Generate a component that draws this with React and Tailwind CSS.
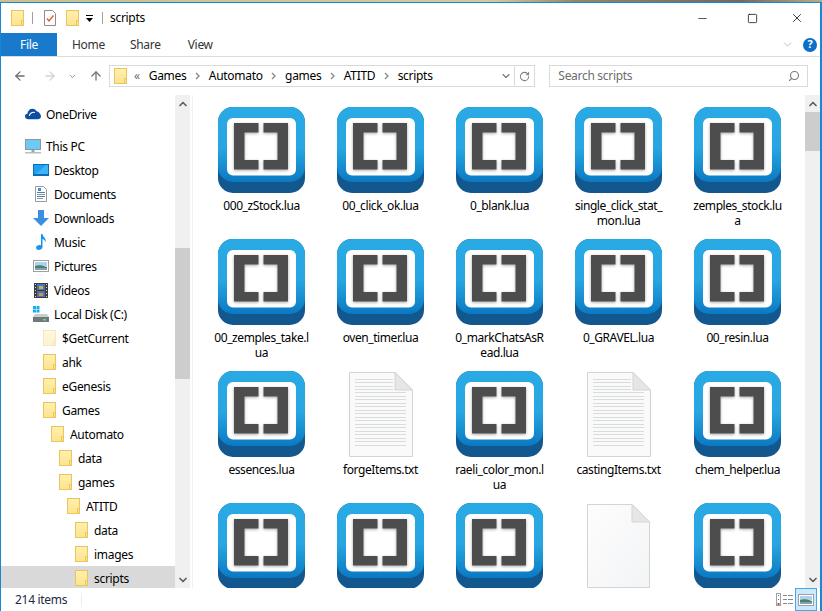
import React from 'react';
import { ArrowLeft, ArrowRight, ArrowUp, ChevronDown, ChevronUp, RotateCw, Search, Minus, Square, X } from 'lucide-react';

const FolderIcon = ({ faded = false }) => (
  <svg width="13" height="16" viewBox="0 0 13 16" className={`flex-shrink-0 ${faded ? 'opacity-40' : ''}`}>
    <defs>
      <linearGradient id="folderFill" x1="0" y1="0" x2="0" y2="1">
        <stop offset="0" stopColor="#ffefb0" />
        <stop offset="1" stopColor="#fde38c" />
      </linearGradient>
    </defs>
    <rect x="0.5" y="0.5" width="12" height="15" fill="url(#folderFill)" stroke="#e9c65c" />
    <path d="M10.5 15.5V10.5H12.5" fill="none" stroke="#e9c65c" />
  </svg>
);

const BracketsIcon = () => (
  <svg width="87" height="86" viewBox="0 0 87 86" className="flex-shrink-0">
    <defs>
      <linearGradient id="bracketsBlue" x1="0" y1="0" x2="0" y2="1">
        <stop offset="0" stopColor="#2aaae4" />
        <stop offset="0.55" stopColor="#27a6e1" />
        <stop offset="1" stopColor="#0a79c3" />
      </linearGradient>
      <filter id="bracketsShadow" x="-20%" y="-20%" width="140%" height="140%">
        <feDropShadow dx="0" dy="1" stdDeviation="1.5" floodColor="#000" floodOpacity="0.35" />
      </filter>
    </defs>
    <rect x="0" y="0" width="87" height="86" rx="15" fill="#13578f" />
    <rect x="0" y="0" width="87" height="75" rx="15" fill="url(#bracketsBlue)" />
    <rect x="9" y="11" width="69" height="57.5" rx="6" fill="#fff" />
    <g filter="url(#bracketsShadow)" fill="#4d4d4d">
      <path d="M16 16H40.500V25.500H26.500V53H40.500V62.500H16Z" />
      <path d="M45.500 16H70V62.500H45.500V53H59.500V25.500H45.500Z" />
    </g>
  </svg>
);

const TextFileIcon = () => (
  <svg width="64" height="85" viewBox="0 0 64 85" className="flex-shrink-0">
    <path d="M0.500 0.500H46L63.500 18V84.500H0.500Z" fill="#fafafa" stroke="#d4d4d4" />
    <path d="M46 0.500V18H63.500Z" fill="#e6e6e6" stroke="#d4d4d4" />
    {[7, 10, 14, 17].map((y) => (
      <rect key={y} x="6" y={y} width="38" height="1" fill="#d9dcdc" />
    ))}
    {[20, 24, 27, 31, 34, 38, 41, 45, 48, 52, 55, 59, 62, 66, 69, 73].map((y) => (
      <rect key={y} x="6" y={y} width="51" height="1" fill="#d9dcdc" />
    ))}
  </svg>
);

const BlankFileIcon = () => (
  <svg width="63" height="84" viewBox="0 0 63 84" className="flex-shrink-0">
    <defs>
      <linearGradient id="blankFill" x1="0" y1="0" x2="1" y2="1">
        <stop offset="0" stopColor="#fdfdfd" />
        <stop offset="1" stopColor="#f3f4f6" />
      </linearGradient>
    </defs>
    <path d="M0.500 0.500H45L62.500 18V83.500H0.500Z" fill="url(#blankFill)" stroke="#d4d4d4" />
    <path d="M45 0.500V18H62.500Z" fill="#e6e6e6" stroke="#d4d4d4" />
  </svg>
);

const OneDriveIcon = () => (
  <svg width="17" height="12" viewBox="0 0 17 12">
    <path d="M3 11.500C1 11.500 0 10 0 8.500C0 7 1 6 2.500 5.800C3 2.500 5.500 0.500 8 0.500C10 0.500 11.500 1.500 12.300 3C14.500 3.500 16.800 5.500 17 8.500C17 10 16 11.500 14 11.500Z" fill="#0c4da2" />
    <path d="M4.500 8C5.500 5 8 3.500 10.500 4.500" fill="none" stroke="#fff" strokeWidth="1.200" />
  </svg>
);

const ThisPcIcon = () => (
  <svg width="16" height="15" viewBox="0 0 16 15">
    <rect x="0.500" y="0.500" width="15" height="10" fill="#6fc9f7" stroke="#8a9aa4" />
    <rect x="6.500" y="11" width="3" height="2" fill="#9aa5ad" />
    <rect x="0" y="13" width="16" height="1.500" fill="#b6bec4" />
  </svg>
);

const DesktopIcon = () => (
  <svg width="16" height="12" viewBox="0 0 16 12">
    <rect x="0" y="0" width="16" height="12" fill="#0c6bb3" />
    <rect x="1" y="1" width="14" height="9" fill="#1ba1f0" />
    <path d="M3 10L13 1H15V10Z" fill="#3fb4f5" />
  </svg>
);

const DocumentsIcon = () => (
  <svg width="12" height="16" viewBox="0 0 12 16">
    <path d="M0.500 0.500H8.500L11.500 3.500V15.500H0.500Z" fill="#fdfdfd" stroke="#9a9a9a" />
    <rect x="3" y="2" width="3" height="3" fill="#3d8fd6" />
    <rect x="2" y="6" width="8" height="1" fill="#5b7f95" />
    <rect x="2" y="8" width="8" height="1" fill="#7aa0b8" />
    <rect x="2" y="10" width="8" height="1" fill="#5b7f95" />
    <rect x="2" y="12" width="6" height="1" fill="#7aa0b8" />
  </svg>
);

const DownloadsIcon = () => (
  <svg width="16" height="16" viewBox="0 0 16 16">
    <path d="M5 0H11V8H16L8 16L0 8H5Z" fill="#3a8fe0" />
  </svg>
);

const MusicIcon = () => (
  <svg width="11" height="16" viewBox="0 0 11 16">
    <path d="M5 0H6.500C6.800 3 10.500 4 9.800 8.500C9.300 6.500 8 5.500 6.500 5V13C6.500 15 4.500 16 2.500 16C1 16 0 15 0 13.800C0 12.300 1.800 11 3.500 11C4 11 4.600 11.100 5 11.300Z" fill="#1a93ec" />
  </svg>
);

const PicturesIcon = () => (
  <svg width="16" height="12" viewBox="0 0 16 12">
    <rect x="0.500" y="0.500" width="15" height="11" fill="#fff" stroke="#a0a0a0" />
    <rect x="2" y="2" width="12" height="4" fill="#a9d3ee" />
    <path d="M2 6C5 4.500 9 5 14 7V10H2Z" fill="#4f7f6a" />
    <rect x="2" y="8" width="12" height="2" fill="#7ea3b5" />
  </svg>
);

const VideosIcon = () => (
  <svg width="14" height="15" viewBox="0 0 14 15">
    <rect x="0" y="0" width="14" height="15" fill="#3c3c3c" />
    {[1, 4, 7, 10, 13].map((y) => (
      <g key={y}>
        <rect x="1" y={y} width="1" height="1" fill="#ddd" />
        <rect x="12" y={y} width="1" height="1" fill="#ddd" />
      </g>
    ))}
    <rect x="3" y="1" width="8" height="6" fill="#3a78c8" />
    <rect x="5" y="3" width="4" height="3" fill="#e3a92e" />
    <rect x="3" y="8" width="8" height="6" fill="#4a6fc0" />
    <rect x="5" y="10" width="4" height="3" fill="#d8962a" />
  </svg>
);

const LocalDiskIcon = () => (
  <svg width="16" height="16" viewBox="0 0 16 16">
    <rect x="0" y="0" width="3" height="3" fill="#16b0f0" />
    <rect x="3.500" y="0" width="3" height="3" fill="#16b0f0" />
    <rect x="0" y="3.500" width="3" height="3" fill="#16b0f0" />
    <rect x="3.500" y="3.500" width="3" height="3" fill="#16b0f0" />
    <path d="M2 8H14L16 11H0Z" fill="#c9cdd0" />
    <rect x="0" y="11" width="16" height="5" fill="#71777a" />
    <rect x="10" y="13" width="3" height="1.500" fill="#5fe35f" />
  </svg>
);

const CheckDocIcon = () => (
  <svg width="12" height="16" viewBox="0 0 12 16">
    <path d="M0.500 0.500H8.500L11.500 3.500V15.500H0.500Z" fill="#fff" stroke="#8d8d8d" />
    <path d="M3 8.500L5 11L9.500 5.500" fill="none" stroke="#e2592a" strokeWidth="1.300" />
  </svg>
);

const TreeRow = ({ icon, label, indent }) => (
  <div className={`h-6 flex items-center flex-shrink-0 gap-[5px] ${indent}`}>
    <div className="w-[16px] flex items-center justify-center flex-shrink-0">{icon}</div>
    <span className="pt-[2px] text-black whitespace-nowrap">{label}</span>
  </div>
);

const FolderRow = ({ label, indent, faded, selected }) => (
  <div className={`h-6 flex items-center flex-shrink-0 gap-[6px] ${indent} ${selected ? 'bg-[#d9d9d9]' : ''}`}>
    <FolderIcon faded={faded} />
    <span className="pt-[2px] text-black whitespace-nowrap">{label}</span>
  </div>
);

const FileCell = ({ name, kind = 'brackets' }) => (
  <div className="h-[132px] w-[119px] flex flex-col items-center flex-shrink-0">
    <div className="h-[86px] flex items-center justify-center">
      {kind === 'brackets' && <BracketsIcon />}
      {kind === 'text' && <TextFileIcon />}
      {kind === 'blank' && <BlankFileIcon />}
    </div>
    <div className="mt-[5px] text-center leading-[15px] tracking-[-0.42px] text-black whitespace-pre-line">{name}</div>
  </div>
);

const FILES = [
  { name: '000_zStock.lua' },
  { name: '00_click_ok.lua' },
  { name: '0_blank.lua' },
  { name: 'single_click_stat_\nmon.lua' },
  { name: 'zemples_stock.lu\na' },
  { name: '00_zemples_take.l\nua' },
  { name: 'oven_timer.lua' },
  { name: '0_markChatsAsR\nead.lua' },
  { name: '0_GRAVEL.lua' },
  { name: '00_resin.lua' },
  { name: 'essences.lua' },
  { name: 'forgeItems.txt', kind: 'text' },
  { name: 'raeli_color_mon.l\nua' },
  { name: 'castingItems.txt', kind: 'text' },
  { name: 'chem_helper.lua' },
  { name: '' },
  { name: '' },
  { name: '' },
  { name: '', kind: 'blank' },
  { name: '' },
];

const Crumb = ({ label }) => (
  <>
    <span className="text-[#000]">{label}</span>
    <svg width="5" height="8" viewBox="0 0 5 8" className="mx-[8.7px]">
      <path d="M1 1L4 4L1 7" fill="none" stroke="#8a8a8a" strokeWidth="1.400" />
    </svg>
  </>
);

const Scrollbar = ({ thumb }) => (
  <div className="w-[15px] flex-shrink-0 bg-[#f0f0f0] flex flex-col items-center">
    <div className="h-[17px] flex items-center justify-center flex-shrink-0">
      <ChevronUp size={12} strokeWidth={3.5} className="text-[#606060]" />
    </div>
    <div className={`w-full bg-[#cdcdcd] flex-shrink-0 ${thumb}`} />
    <div className="flex-1" />
    <div className="h-[17px] flex items-center justify-center flex-shrink-0">
      <ChevronDown size={12} strokeWidth={3.5} className="text-[#606060]" />
    </div>
  </div>
);

export default function App() {
  return (
    <div className="w-[822px] h-[611px] overflow-hidden flex flex-col bg-white text-[12px] font-['Noto_Sans',sans-serif] tracking-[-0.3px]">
      {/* wallpaper behind the window */}
      <div className="h-[2px] flex-shrink-0 bg-[linear-gradient(90deg,#c9c08e_0%,#d2cba0_60%,#8f8a66_70%,#6f6a66_90%,#b5ae84_100%)]" />

      <div className="flex-1 min-h-0 flex flex-col border-x border-t border-[#1a86d8] border-r-2">
        {/* title bar */}
        <div className="h-[30px] flex-shrink-0 flex items-center pl-[10px]">
          <FolderIcon />
          <div className="w-px h-[12px] bg-[#a0a0a0] ml-[8px] mr-[11px]" />
          <CheckDocIcon />
          <div className="ml-[10px]"><FolderIcon /></div>
          <svg width="8" height="7" viewBox="0 0 8 7" className="ml-[7px]">
            <rect x="0" y="0" width="7" height="1" fill="#000" />
            <path d="M0 3H7L3.500 7Z" fill="#000" />
          </svg>
          <div className="w-px h-[12px] bg-[#a0a0a0] ml-[8px] mr-[7px]" />
          <span className="text-black">scripts</span>
          <div className="flex-1" />
          <Minus size={13} strokeWidth={1.2} className="text-black mr-[38px]" />
          <Square size={11} strokeWidth={1.6} className="text-black mr-[32px]" />
          <X size={14} strokeWidth={1.3} className="text-black mr-[16px]" />
        </div>

        {/* ribbon tabs */}
        <div className="h-[24px] flex-shrink-0 flex items-center border-b border-[#dadbdc]">
          <div className="w-[56px] h-[23px] bg-[#1979ca] text-white flex items-center justify-center">File</div>
          <span className="ml-[15px] text-[#333]">Home</span>
          <span className="ml-[25px] text-[#333]">Share</span>
          <span className="ml-[27px] text-[#333]">View</span>
          <div className="flex-1" />
          <ChevronDown size={13} strokeWidth={1.2} className="text-[#9a9a9a] mr-[9px]" />
          <div className="w-[14px] h-[14px] mr-[3px] rounded-full bg-[#0a6fc9] text-white text-[11px] font-bold flex items-center justify-center">?</div>
        </div>

        {/* address bar */}
        <div className="h-[38px] flex-shrink-0 flex items-center pl-[12px] pr-[12px]">
          <ArrowLeft size={14} strokeWidth={2.2} className="text-[#6d6d6d]" />
          <ArrowRight size={14} strokeWidth={2.2} className="text-[#d4d4d4] ml-[16px]" />
          <ChevronDown size={9} strokeWidth={2.5} className="text-[#8a8a8a] ml-[11px]" />
          <ArrowUp size={14} strokeWidth={2.2} className="text-[#6d6d6d] ml-[12px]" />
          <div className="ml-[6px] w-[427px] h-[22px] border border-[#d9d9d9] flex items-center pl-[4px]">
            <FolderIcon />
            <span className="ml-[7px] mr-[9px] text-[#6d6d6d]">«</span>
            <Crumb label="Games" />
            <Crumb label="Automato" />
            <Crumb label="games" />
            <Crumb label="ATITD" />
            <span className="text-black">scripts</span>
            <div className="flex-1" />
            <ChevronDown size={12} strokeWidth={2.2} className="text-[#777] mr-[2px]" />
            <div className="h-full w-[20px] border-l border-[#d9d9d9] flex items-center justify-center">
              <RotateCw size={11} strokeWidth={2.2} className="text-[#808080]" />
            </div>
          </div>
          <div className="ml-[14px] w-[259px] h-[22px] border border-[#d9d9d9] flex items-center justify-between pl-[8px] pr-[7px]">
            <span className="text-[#6d6d6d]">Search scripts</span>
            <Search size={12} strokeWidth={2.2} className="text-[#777] -scale-x-100" />
          </div>
        </div>

        {/* body */}
        <div className="flex-1 min-h-0 flex">
          {/* nav pane */}
          <div className="w-[174px] flex-shrink-0 overflow-hidden flex flex-col pt-[7px] pb-0">
            <TreeRow icon={<OneDriveIcon />} label="OneDrive" indent="pl-[24px]" />
            <div className="mt-[8px]">
              <TreeRow icon={<ThisPcIcon />} label="This PC" indent="pl-[24px]" />
            </div>
            <TreeRow icon={<DesktopIcon />} label="Desktop" indent="pl-[32px]" />
            <TreeRow icon={<DocumentsIcon />} label="Documents" indent="pl-[32px]" />
            <TreeRow icon={<DownloadsIcon />} label="Downloads" indent="pl-[32px]" />
            <TreeRow icon={<MusicIcon />} label="Music" indent="pl-[32px]" />
            <TreeRow icon={<PicturesIcon />} label="Pictures" indent="pl-[32px]" />
            <TreeRow icon={<VideosIcon />} label="Videos" indent="pl-[32px]" />
            <TreeRow icon={<LocalDiskIcon />} label="Local Disk (C:)" indent="pl-[32px]" />
            <FolderRow label="$GetCurrent" indent="pl-[42px]" faded />
            <FolderRow label="ahk" indent="pl-[42px]" />
            <FolderRow label="eGenesis" indent="pl-[42px]" />
            <FolderRow label="Games" indent="pl-[42px]" />
            <FolderRow label="Automato" indent="pl-[50px]" />
            <FolderRow label="data" indent="pl-[58px]" />
            <FolderRow label="games" indent="pl-[58px]" />
            <FolderRow label="ATITD" indent="pl-[66px]" />
            <FolderRow label="data" indent="pl-[74px]" />
            <FolderRow label="images" indent="pl-[74px]" />
            <FolderRow label="scripts" indent="pl-[74px]" selected />
          </div>
          <Scrollbar thumb="mt-[136px] h-[131px]" />
          <div className="w-[3px] flex-shrink-0 border-r border-[#f0f0f0]" />

          {/* file grid */}
          <div className="flex-1 min-w-0 overflow-hidden pl-[9px] pt-[12px]">
            <div className="grid grid-cols-[repeat(5,119px)]">
              {FILES.map((file, i) => (
                <FileCell key={i} name={file.name} kind={file.kind} />
              ))}
            </div>
          </div>
          <Scrollbar thumb="h-[39px]" />
        </div>

        {/* status bar */}
        <div className="h-[23px] flex-shrink-0 flex items-center pl-[14px]">
          <span className="text-[#1f2a44]">214 items</span>
          <div className="w-px h-[14px] bg-[#eeeeee] ml-[14px]" />
          <div className="flex-1" />
          <svg width="17" height="13" viewBox="0 0 17 13" className="mr-[2px]">
            <rect x="0.500" y="0.500" width="4" height="12" fill="#fff" stroke="#a0a0a0" />
            <rect x="2" y="2" width="1" height="1" fill="#3a78c8" />
            <rect x="2" y="6" width="1" height="1" fill="#3a78c8" />
            <rect x="1.500" y="10" width="2" height="2" fill="#d04040" />
            {[2, 6, 10].map((y) => (
              <g key={y}>
                <rect x="7" y={y} width="4" height="1" fill="#8a8a8a" />
                <rect x="12" y={y} width="5" height="1" fill="#8a8a8a" />
              </g>
            ))}
          </svg>
          <div className="w-[22px] h-[23px] mr-[3px] border border-[#4aa8dc] bg-[#cce8ff] flex items-center justify-center">
            <PicturesIcon />
          </div>
        </div>
      </div>
    </div>
  );
}
